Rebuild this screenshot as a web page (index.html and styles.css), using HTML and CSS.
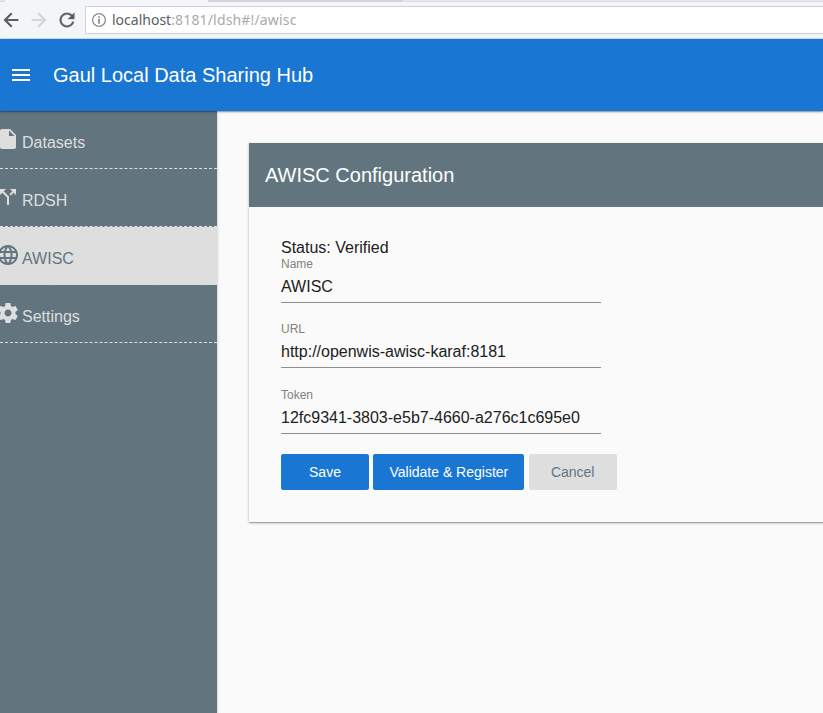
FILE: index.html
```html
<!DOCTYPE html>
<html lang="en">
<head>
<meta charset="utf-8">
<title>Gaul Local Data Sharing Hub</title>
<link rel="stylesheet" href="styles.css">
</head>
<body>
<div class="window">
  <div class="browser">
    <div class="tabs"><span class="tab tab-edge"></span><span class="tab tab-active"></span><span class="tab tab-idle"></span></div>
    <div class="navbar">
      <svg class="nav-icon" viewBox="0 0 24 24"><path d="M20 10.8H8.2l5.4-5.4L12 3.8 3.8 12l8.2 8.2 1.6-1.6-5.4-5.4H20z"/></svg>
      <svg class="nav-icon nav-disabled" viewBox="0 0 24 24"><path d="M4 10.8h11.8l-5.4-5.4L12 3.8l8.2 8.2-8.2 8.2-1.6-1.6 5.4-5.4H4z"/></svg>
      <svg class="nav-icon" viewBox="0 0 24 24"><path d="M17.65 6.35C16.2 4.9 14.21 4 12 4c-4.42 0-7.99 3.58-7.99 8s3.57 8 7.99 8c3.73 0 6.84-2.55 7.73-6h-2.08c-.82 2.33-3.04 4-5.65 4-3.31 0-6-2.69-6-6s2.69-6 6-6c1.66 0 3.14.69 4.22 1.78L13 11h7V4l-2.35 2.35z" stroke="#5a5c66" stroke-width=".3"/></svg>
      <div class="address">
        <svg class="info" viewBox="0 0 16 16"><circle cx="8" cy="8" r="6.4" fill="none" stroke="#8b8c92" stroke-width="1.3"/><path d="M7.2 4.2h1.6v1.5H7.2zM7.2 7h1.6v4.8H7.2z" fill="#7d7e85"/></svg>
        <span class="url"><span class="host">localhost</span>:8181/ldsh#!/awisc</span>
      </div>
    </div>
  </div>
  <header class="toolbar">
    <svg class="icon" viewBox="0 0 24 24"><path d="M3 18h18v-2H3v2zm0-5h18v-2H3v2zm0-7v2h18V6H3z"/></svg>
    <h1>Gaul Local Data Sharing Hub</h1>
  </header>
  <div class="body">
    <nav class="sidebar">
      <a class="item"><svg class="icon" viewBox="0 0 24 24"><path d="M6 2c-1.1 0-1.99.9-1.99 2L4 20c0 1.1.89 2 1.99 2H18c1.1 0 2-.9 2-2V8l-6-6H6zm7 7V3.500L18.500 9H13z"/></svg><span>Datasets</span></a>
      <a class="item"><svg class="icon" viewBox="0 0 24 24"><path d="M14 4l2.290 2.290-2.880 2.880 1.420 1.420 2.880-2.880L20 10V4zm-4 0H4v6l2.290-2.290 4.710 4.700V20h2v-8.410l-5.290-5.300z"/></svg><span>RDSH</span></a>
      <a class="item selected"><svg class="icon" viewBox="0 0 24 24"><path d="M11.990 2C6.470 2 2 6.480 2 12s4.470 10 9.990 10C17.520 22 22 17.520 22 12S17.520 2 11.990 2zm6.930 6h-2.950c-.32-1.250-.78-2.450-1.380-3.560 1.840.63 3.370 1.910 4.330 3.560zM12 4.040c.83 1.200 1.480 2.530 1.910 3.960h-3.820c.43-1.430 1.080-2.760 1.910-3.960zM4.260 14C4.100 13.360 4 12.690 4 12s.1-1.360.26-2h3.380c-.08.66-.14 1.320-.14 2 0 .68.06 1.340.14 2H4.260zm.82 2h2.950c.32 1.250.78 2.450 1.380 3.560-1.840-.63-3.370-1.900-4.330-3.560zm2.950-8H5.080c.96-1.660 2.490-2.930 4.330-3.560C8.810 5.550 8.350 6.750 8.030 8zM12 19.960c-.83-1.200-1.480-2.530-1.910-3.960h3.820c-.43 1.430-1.080 2.760-1.910 3.960zM14.340 14H9.660c-.09-.66-.16-1.320-.16-2 0-.68.07-1.350.16-2h4.680c.09.65.16 1.320.16 2 0 .68-.07 1.340-.16 2zm.25 5.560c.6-1.110 1.060-2.310 1.380-3.560h2.950c-.96 1.650-2.490 2.930-4.330 3.560zM16.360 14c.08-.66.14-1.320.14-2 0-.68-.06-1.340-.14-2h3.380c.16.64.26 1.310.26 2s-.1 1.360-.26 2h-3.380z"/></svg><span>AWISC</span></a>
      <a class="item"><svg class="icon" viewBox="0 0 24 24"><path d="M19.430 12.980c.04-.32.07-.64.07-.98s-.03-.66-.07-.98l2.110-1.650c.19-.15.24-.42.12-.64l-2-3.460c-.12-.22-.39-.3-.61-.22l-2.490 1c-.52-.4-1.080-.73-1.690-.98l-.38-2.650C14.460 2.180 14.250 2 14 2h-4c-.25 0-.46.18-.49.42l-.38 2.650c-.61.25-1.170.59-1.690.98l-2.490-1c-.23-.09-.49 0-.61.22l-2 3.460c-.13.22-.07.49.12.64l2.110 1.650c-.04.32-.07.65-.07.98s.03.66.07.98l-2.110 1.650c-.19.15-.24.42-.12.64l2 3.460c.12.22.39.3.61.22l2.490-1c.52.4 1.080.73 1.690.98l.38 2.650c.03.24.24.42.49.42h4c.25 0 .46-.18.49-.42l.38-2.650c.61-.25 1.170-.59 1.690-.98l2.490 1c.23.09.49 0 .61-.22l2-3.460c.12-.22.07-.49-.12-.64l-2.110-1.650zM12 15.500c-1.930 0-3.500-1.570-3.500-3.500s1.570-3.500 3.500-3.500 3.500 1.570 3.500 3.500-1.570 3.500-3.500 3.500z"/></svg><span>Settings</span></a>
    </nav>
    <main class="content">
      <section class="card">
        <h2>AWISC Configuration</h2>
        <div class="card-body">
          <div class="status">Status: Verified</div>
          <div class="field"><div class="label">Name</div><div class="value">AWISC</div></div>
          <div class="field"><div class="label">URL</div><div class="value">http://openwis-awisc-karaf:8181</div></div>
          <div class="field"><div class="label">Token</div><div class="value">12fc9341-3803-e5b7-4660-a276c1c695e0</div></div>
          <div class="actions">
            <button class="primary">Save</button>
            <button class="primary">Validate &amp; Register</button>
            <button class="cancel">Cancel</button>
          </div>
        </div>
      </section>
    </main>
  </div>
</div>
</body>
</html>
```
FILE: styles.css
```css
* { box-sizing: border-box; }
body {
  margin: 0;
  overflow: hidden;
  font-family: "Liberation Sans", Arial, sans-serif;
  font-size: 16px;
  color: #212121;
  background: #fafafa;
}
.window { height: 713px; display: flex; flex-direction: column; overflow: hidden; }
.icon { width: 24px; height: 24px; fill: currentColor; flex: none; display: block; }

.browser { height: 39px; flex: none; background: #f4f5f7; border-bottom: 1px solid #d9dbe3; }
.tabs { display: flex; height: 2px; background: #e4e5ee; }
.tab-edge { width: 5px; border-bottom: 1px solid #d3d4e4; }
.tab-active { width: 203px; background: #f4f5f7; }
.tab-idle { width: 195px; background: #d4d4d9; }
.tabs::after { content: ""; flex: 1; border-bottom: 1px solid #dcdde8; }
.navbar { display: flex; height: 36px; padding-top: 4px; }
.nav-icon { width: 22px; height: 22px; margin: 3px 6px 0 0; fill: #5a5c66; flex: none; }
.nav-disabled { fill: #d4d5d9; }
.address {
  display: flex;
  align-items: center;
  flex: 1;
  height: 28px;
  margin-left: 1px;
  padding-left: 5px;
  background: #fff;
  border: 1px solid #cdd0e4;
  border-right: 0;
  border-radius: 2px 0 0 2px;
}
.info { width: 16px; height: 16px; margin-right: 5px; }
.url { font-family: "Noto Sans", "Open Sans", sans-serif; font-size: 14px; line-height: 20px; letter-spacing: .16px; color: #a9aaad; white-space: nowrap; }
.host { letter-spacing: 0; color: #5b5c64; }

.toolbar {
  position: relative;
  z-index: 2;
  display: flex;
  align-items: center;
  flex: none;
  height: 72px;
  padding-left: 9px;
  gap: 20px;
  color: #fff;
  background: #1976d2;
  box-shadow: 0 1px 3px rgba(0,0,0,.2), 0 1px 1px rgba(0,0,0,.14), 0 2px 1px -1px rgba(0,0,0,.12);
}
h1, h2 { margin: 0; font-size: 20px; font-weight: 400; }

.body { display: flex; flex: 1; min-height: 0; }
.sidebar {
  width: 217px;
  flex: none;
  color: #dedede;
  background: #62757f;
  box-shadow: 0 1px 3px rgba(0,0,0,.2), 0 1px 1px rgba(0,0,0,.14), 0 2px 1px -1px rgba(0,0,0,.12);
}
.item {
  display: flex;
  height: 58px;
  padding-top: 16px;
  gap: 2px;
  border-bottom: 1px dashed #dedede;
}
.item .icon { margin-left: -4px; }
.item span { padding-top: 7px; line-height: 18px; }
.selected { color: #62757f; background: #dedede; }

.content { flex: 1; min-width: 0; padding: 32px 0 0 32px; }
.card {
  height: 379px;
  margin-right: -8px;
  box-shadow: 0 1px 3px rgba(0,0,0,.2), 0 1px 1px rgba(0,0,0,.14), 0 2px 1px -1px rgba(0,0,0,.12);
}
.card h2 { height: 64px; padding-left: 16px; line-height: 64px; color: #fff; background: #62757f; }
.card-body { padding: 32px; }
.status { line-height: 18px; }
.field { width: 320px; height: 46px; margin-bottom: 19.4px; border-bottom: 1px solid #8e8e8e; }
.label { font-size: 12px; line-height: 14px; color: #828282; }
.value { margin-top: 7px; line-height: 18px; }
.actions { display: flex; gap: 4.45px; padding-top: .8px; }
button {
  min-width: 88px;
  height: 36px;
  padding: 0 16px;
  border: 0;
  border-radius: 2px;
  font: 14px/36px "Liberation Sans", Arial, sans-serif;
  white-space: nowrap;
}
.primary { color: #fff; background: #1976d2; }
.cancel { color: #62757f; background: #dedede; }
```
